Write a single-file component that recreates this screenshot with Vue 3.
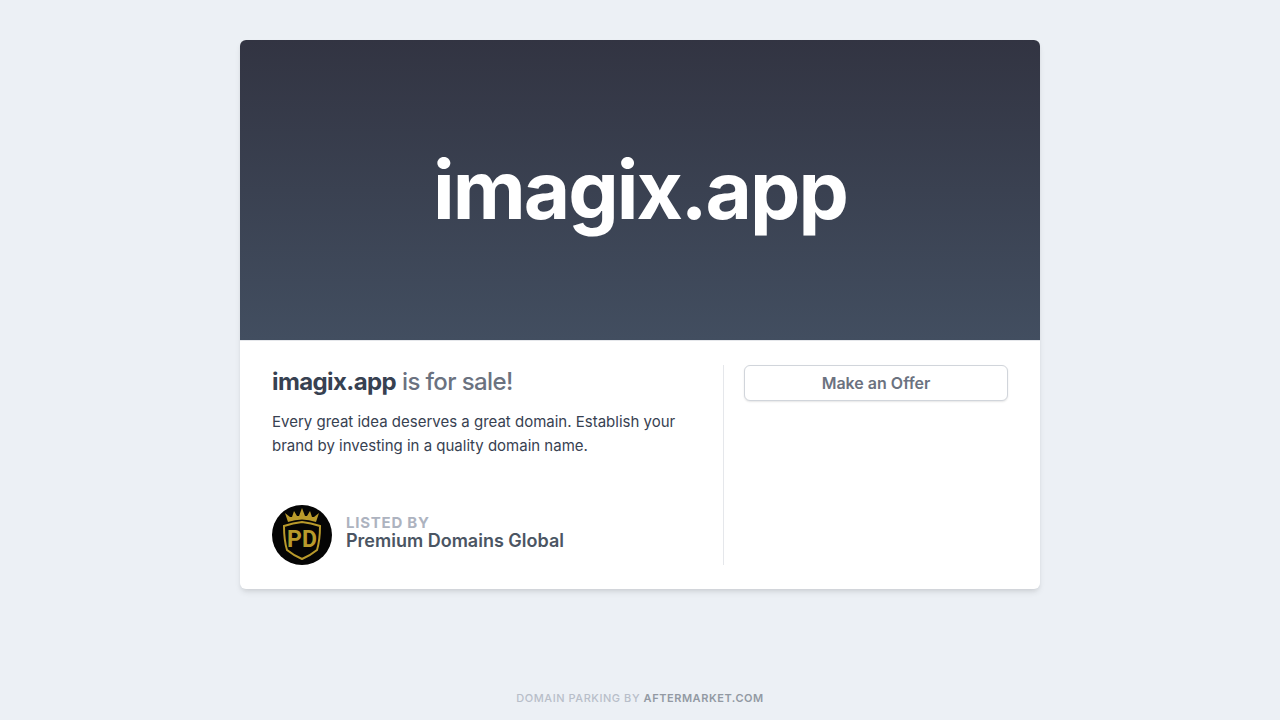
<template>
    <div class="page">
        <main class="card">
            <header class="hero">
                <h1>{{ domain }}</h1>
            </header>

            <div class="body">
                <section class="details">
                    <div>
                        <h2><strong>{{ domain }}</strong> is for sale!</h2>
                        <p class="pitch">Every great idea deserves a great domain. Establish your brand by investing in a quality domain name.</p>
                    </div>

                    <div class="seller">
                        <svg class="avatar" viewBox="0 0 60 60" aria-hidden="true">
                            <circle cx="30" cy="30" r="30" fill="#050505" />
                            <path fill="#b99a2b" d="M16 17 L13 8 L18 12 L20 12 L22 6 L25 11 L27 11 L30 3 L33 11 L35 11 L38 6 L40 12 L42 12 L47 8 L44 17 Q30 12 16 17 Z" />
                            <path class="shield" d="M30 17 Q39 18 48 21 Q48 35 45 45 Q39 50 30 54 Q21 50 15 45 Q12 35 12 21 Q21 18 30 17 Z" />
                            <text x="30" y="42" text-anchor="middle">PD</text>
                        </svg>
                        <div class="seller-text">
                            <span class="label">Listed by</span>
                            <span class="name">{{ seller }}</span>
                        </div>
                    </div>
                </section>

                <aside class="actions">
                    <button type="button">Make an Offer</button>
                </aside>
            </div>
        </main>

        <footer>Domain parking by <a href="#">Aftermarket.com</a></footer>
    </div>
</template>

<script setup>
    const domain = 'imagix.app'
    const seller = 'Premium Domains Global'
</script>

<style>
    body {
        background: #ecf0f5;
    }
</style>

<style scoped>
    .page {
        min-height: 100vh;
        box-sizing: border-box;
        padding: 40px 20px 16px;
        display: flex;
        flex-direction: column;
        align-items: center;
        justify-content: space-between;
        gap: 40px;
        font-family: Inter, "Liberation Sans", sans-serif;
        color: #374151;
    }

    .card {
        width: 100%;
        max-width: 800px;
        background: #fff;
        border-radius: 6px;
        overflow: hidden;
        box-shadow: 0 4px 6px -1px rgba(0, 0, 0, 0.1), 0 2px 4px -1px rgba(0, 0, 0, 0.06);
    }

    .hero {
        min-height: 300px;
        display: flex;
        align-items: center;
        justify-content: center;
        background: linear-gradient(#323442, #424e60);
    }

    h1 {
        margin: 0;
        font-size: 80px;
        line-height: 80px;
        font-weight: 700;
        letter-spacing: -0.025em;
        color: #fff;
    }

    .body {
        display: flex;
        padding: 24px 32px;
        border-top: 1px solid #e5e7eb;
    }

    .details {
        flex: 1;
        min-height: 200px;
        padding-right: 32px;
        display: flex;
        flex-direction: column;
        justify-content: space-between;
        gap: 24px;
    }

    h2 {
        margin: 0 0 11px;
        font-size: 24px;
        line-height: 34px;
        font-weight: 500;
        letter-spacing: -0.025em;
        color: #6b7280;
    }

    h2 strong {
        font-weight: 700;
        color: #374151;
    }

    .pitch {
        margin: 0;
        font-size: 15px;
        line-height: 24px;
    }

    .seller {
        display: flex;
        align-items: center;
        gap: 14px;
    }

    .avatar {
        width: 60px;
        height: 60px;
    }

    .avatar text {
        font-size: 23px;
        font-weight: 700;
        font-family: Roboto, sans-serif;
        fill: #b99a2b;
    }

    .shield {
        fill: none;
        stroke: #b99a2b;
        stroke-width: 2;
    }

    .seller-text {
        display: flex;
        flex-direction: column;
        padding-bottom: 4px;
    }

    .label {
        font-size: 15px;
        line-height: 16px;
        font-weight: 700;
        letter-spacing: 0.05em;
        text-transform: uppercase;
        color: #adb3bf;
    }

    .name {
        font-size: 18px;
        line-height: 20px;
        font-weight: 600;
        color: #4b5563;
    }

    .actions {
        flex: 0 0 264px;
        padding-left: 20px;
        border-left: 1px solid #e5e7eb;
    }

    button {
        width: 100%;
        height: 36px;
        font-family: inherit;
        font-size: 16px;
        font-weight: 600;
        color: #6b7280;
        background: #fff;
        border: 1px solid #d1d5db;
        border-radius: 6px;
        box-shadow: 0 1px 2px rgba(0, 0, 0, 0.1);
        cursor: pointer;
    }

    footer {
        font-size: 11px;
        line-height: 12px;
        font-weight: 500;
        letter-spacing: 0.05em;
        text-transform: uppercase;
        color: #b8bec9;
    }

    footer a {
        font-weight: 600;
        color: #9299a3;
        text-decoration: none;
    }
</style>
